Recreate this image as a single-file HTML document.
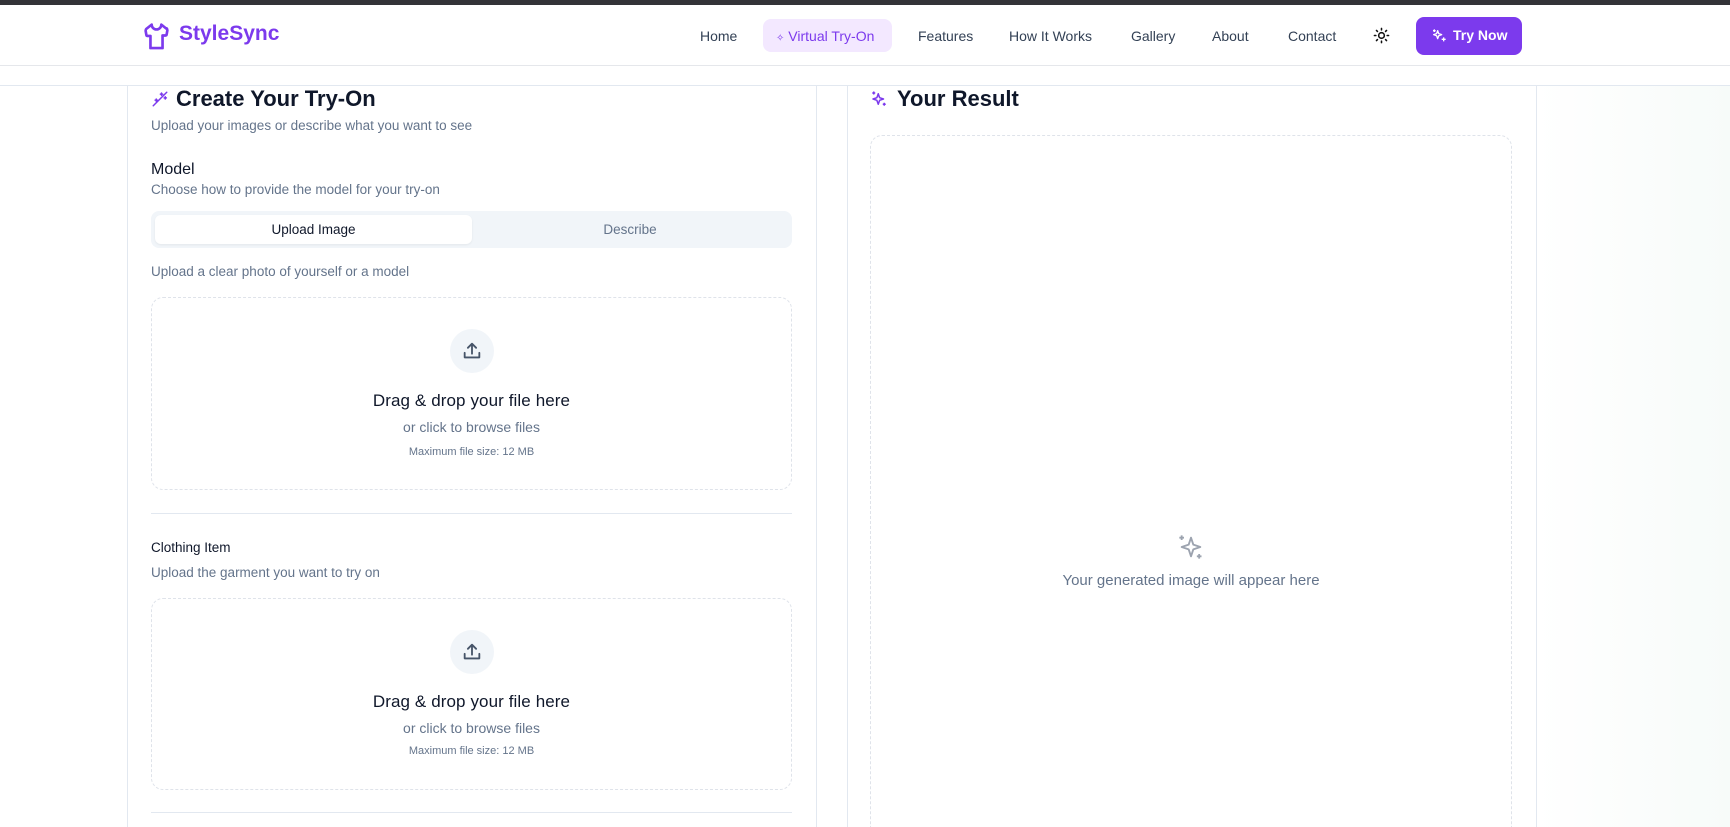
<!DOCTYPE html>
<html style="overflow:hidden;height:827px"><head><meta charset="utf-8"><style>
*{box-sizing:border-box;margin:0;padding:0}
body{width:1730px;height:827px;overflow:hidden;background:#fff;font-family:"Liberation Sans",sans-serif;position:relative;color:#0f172a}
.abs{position:absolute}
.topbar{left:0;top:0;width:1730px;height:5px;background:#333338}
.nav{left:0;top:5px;width:1730px;height:61px;border-bottom:1px solid #e5e7eb;background:#fff}
.navi{font-size:14px;color:#334155;top:28px}
.bg-right{left:1536px;top:86px;width:194px;height:741px;background:linear-gradient(90deg,#fff,#f7fbf9)}
.line85{left:0;top:85px;width:1730px;height:1px;background:#e2e8f0}
.vline{width:1px;background:#e2e8f0;top:85px;height:742px}
.muted{color:#64748b;font-size:13.5px}
.drop{left:151px;width:641px;border:1px dashed #dfe3ea;border-radius:12px}
.circ{width:44px;height:44px;border-radius:50%;background:#f1f5f9;left:298px}
.t1{width:100%;text-align:center;font-size:17px;color:#0f172a;font-weight:500;letter-spacing:.1px}
.t2{width:100%;text-align:center;font-size:14px;color:#64748b}
.t3{width:100%;text-align:center;font-size:11px;color:#64748b}
.hr{left:151px;width:641px;height:1px;background:#e2e8f0}
</style></head><body>
<div class="abs topbar"></div>
<div class="abs bg-right"></div>
<div class="abs nav"></div>
<div class="abs line85"></div>
<div class="abs vline" style="left:127px"></div>
<div class="abs vline" style="left:816px"></div>
<div class="abs vline" style="left:847px"></div>
<div class="abs vline" style="left:1536px"></div>

<svg class="abs" style="left:142px;top:21px" width="29" height="29" viewBox="0 0 24 24" fill="none" stroke="#7c3aed" stroke-width="2.2" stroke-linejoin="round" stroke-linecap="round"><path d="M20.4 6.5 16 3a4 4 0 0 1-8 0L3.6 6.5a2 2 0 0 0-.6 1.6l.6 3.4a1 1 0 0 0 1 .9H7v10h10V12h2.4a1 1 0 0 0 1-.9l.6-3.4a2 2 0 0 0-.6-1.6z"/></svg>
<div class="abs" style="left:179px;top:22px;font-size:21px;font-weight:bold;color:#7c3aed">StyleSync</div>

<div class="abs navi" style="left:700px">Home</div>
<div class="abs" style="left:763px;top:19px;width:129px;height:33px;border-radius:8px;background:#f3e8ff"></div>
<div class="abs navi" style="left:776px;color:#7c3aed"><span style="font-size:10px">✧</span> Virtual Try-On</div>
<div class="abs navi" style="left:918px">Features</div>
<div class="abs navi" style="left:1009px">How It Works</div>
<div class="abs navi" style="left:1131px">Gallery</div>
<div class="abs navi" style="left:1212px">About</div>
<div class="abs navi" style="left:1288px">Contact</div>
<svg class="abs" style="left:1373px;top:27px" width="17" height="17" viewBox="0 0 24 24" fill="none" stroke="#111" stroke-width="2.2" stroke-linecap="round"><circle cx="12" cy="12" r="4"/><path d="M12 2v2M12 20v2M4.9 4.9l1.4 1.4M17.7 17.7l1.4 1.4M2 12h2M20 12h2M4.9 19.1l1.4-1.4M17.7 6.3l1.4-1.4"/></svg>
<div class="abs" style="left:1416px;top:17px;width:106px;height:38px;border-radius:8px;background:#7c3aed"></div>
<svg class="abs" style="left:1431px;top:28px" width="16" height="16" viewBox="0 0 24 24" fill="none" stroke="#fff" stroke-width="2" stroke-linejoin="round"><path d="M10 4l1.6 4.4L16 10l-4.4 1.6L10 16l-1.6-4.4L4 10l4.4-1.6z"/><path d="M19 14v6M16 17h6M5 2v4M3 4h4"/></svg>
<div class="abs" style="left:1453px;top:27px;font-size:14px;font-weight:bold;color:#fff">Try Now</div>

<svg class="abs" style="left:151px;top:90px" width="18" height="18" viewBox="0 0 24 24" fill="none" stroke="#7c3aed" stroke-width="2" stroke-linecap="round"><path d="M3 21 21 3M14 4v3M12.5 5.5h3M19 9v3M17.5 10.5h3M7 12v3M5.5 13.5h3"/></svg>
<div class="abs" style="left:176px;top:86px;font-size:22px;font-weight:bold;color:#0f172a">Create Your Try-On</div>
<div class="abs muted" style="left:151px;top:118px">Upload your images or describe what you want to see</div>
<div class="abs" style="left:151px;top:161px;font-size:16px;font-weight:500">Model</div>
<div class="abs muted" style="left:151px;top:182px">Choose how to provide the model for your try-on</div>
<div class="abs" style="left:151px;top:211px;width:641px;height:37px;border-radius:8px;background:#f1f5f9"></div>
<div class="abs" style="left:155px;top:215px;width:317px;height:29px;border-radius:6px;background:#fff;box-shadow:0 1px 2px rgba(0,0,0,.06);text-align:center;line-height:29px;font-size:13.5px">Upload Image</div>
<div class="abs" style="left:472px;top:215px;width:316px;height:29px;text-align:center;line-height:29px;font-size:13.5px;color:#64748b">Describe</div>
<div class="abs muted" style="left:151px;top:264px">Upload a clear photo of yourself or a model</div>

<div class="abs drop" style="top:297px;height:193px">
<div class="abs circ" style="top:31px"><svg style="margin:11px" width="22" height="22" viewBox="0 0 24 24" fill="none" stroke="#475569" stroke-width="2" stroke-linecap="round" stroke-linejoin="round"><path d="M4 14v5h16v-5M12 15V4M7.5 8.5 12 4l4.5 4.5"/></svg></div>
<div class="abs t1" style="top:93px">Drag &amp; drop your file here</div>
<div class="abs t2" style="top:121px">or click to browse files</div>
<div class="abs t3" style="top:148px">Maximum file size: 12 MB</div>
</div>
<div class="abs hr" style="top:513px"></div>
<div class="abs" style="left:151px;top:540px;font-size:13.5px;font-weight:500">Clothing Item</div>
<div class="abs muted" style="left:151px;top:565px">Upload the garment you want to try on</div>
<div class="abs drop" style="top:598px;height:192px">
<div class="abs circ" style="top:31px"><svg style="margin:11px" width="22" height="22" viewBox="0 0 24 24" fill="none" stroke="#475569" stroke-width="2" stroke-linecap="round" stroke-linejoin="round"><path d="M4 14v5h16v-5M12 15V4M7.5 8.5 12 4l4.5 4.5"/></svg></div>
<div class="abs t1" style="top:93px">Drag &amp; drop your file here</div>
<div class="abs t2" style="top:121px">or click to browse files</div>
<div class="abs t3" style="top:146px">Maximum file size: 12 MB</div>
</div>
<div class="abs hr" style="top:812px"></div>

<svg class="abs" style="left:870px;top:90px" width="18" height="18" viewBox="0 0 24 24" fill="none" stroke="#7c3aed" stroke-width="2" stroke-linejoin="round"><path d="M11 5l1.8 5.2L18 12l-5.2 1.8L11 19l-1.8-5.2L4 12l5.2-1.8z"/><path d="M5 2v4M3 4h4M19 17v4M17 19h4"/></svg>
<div class="abs" style="left:897px;top:86px;font-size:22px;font-weight:bold">Your Result</div>
<div class="abs" style="left:870px;top:135px;width:642px;height:692px;border:1px dashed #dfe3ea;border-bottom:none;border-radius:12px 12px 0 0"></div>
<svg class="abs" style="left:1177px;top:533px" width="28" height="28" viewBox="0 0 24 24" fill="none" stroke="#9ca3af" stroke-width="1.6" stroke-linejoin="round"><path d="M12 4l2 6 6 2-6 2-2 6-2-6-6-2 6-2z"/><path d="M4 2v4M2 4h4M19 18v4M17 20h4"/></svg>
<div class="abs" style="left:870px;top:572px;width:642px;text-align:center;font-size:15px;color:#64748b">Your generated image will appear here</div>
</body></html>
